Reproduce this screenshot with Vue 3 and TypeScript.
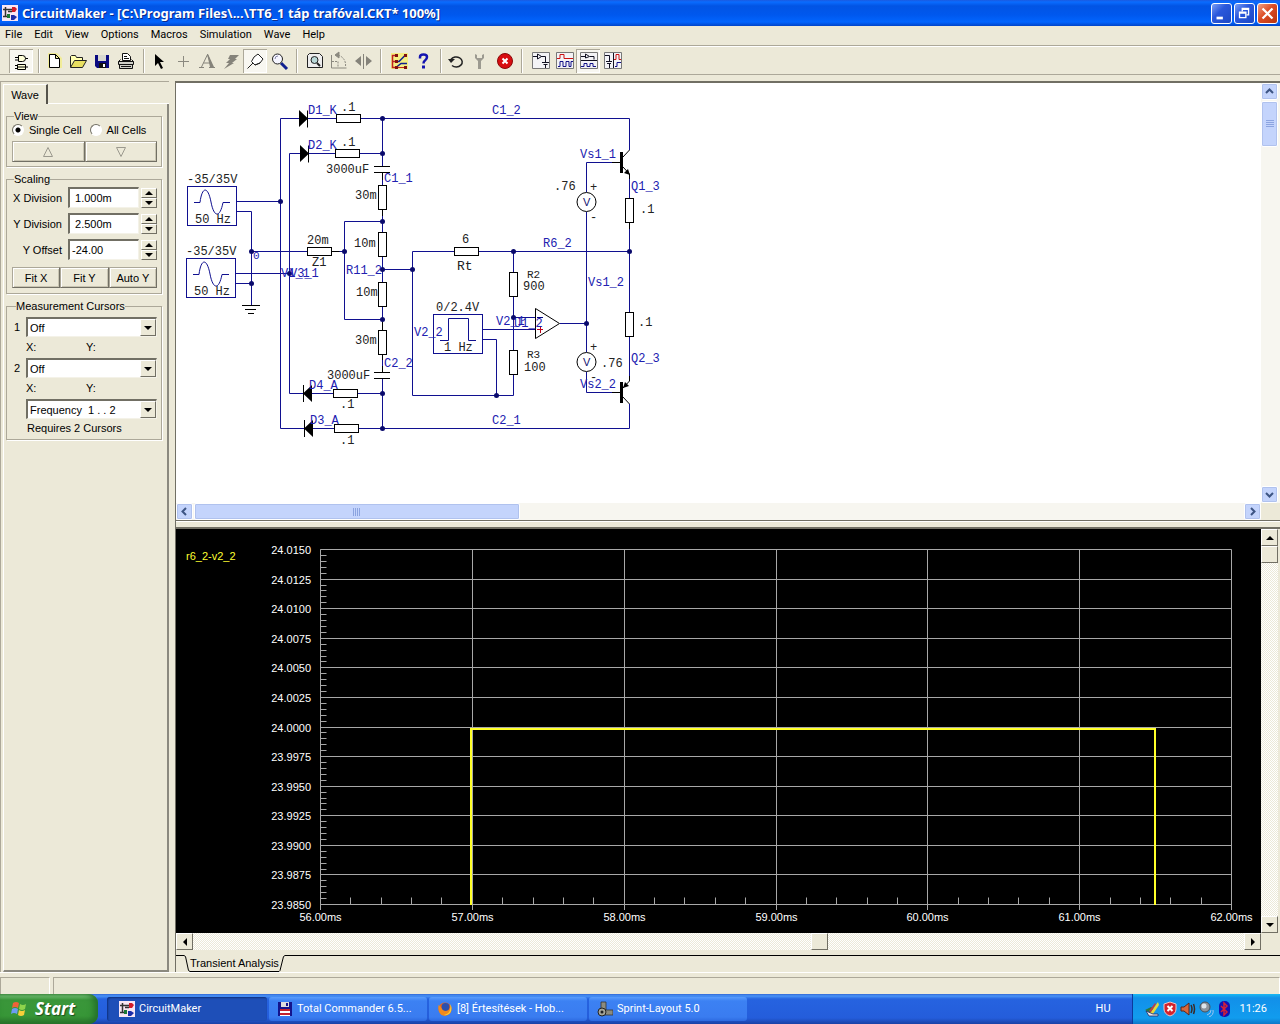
<script setup lang="ts">
import { ref } from 'vue'

interface Tool { name: string; art: string; on?: boolean }
interface Label { x: number; y: number; t: string; net?: boolean; size?: number }
interface Box { x: number; y: number; v?: boolean }

const menus = ['File', 'Edit', 'View', 'Options', 'Macros', 'Simulation', 'Wave', 'Help']

const groups: { wide?: boolean; tools: Tool[] }[] = [
  { tools: [
    { name: 'Digital mode', on: true, art: '<g fill="#ffffd8" stroke="#000"><path d="M9.500 6.500h4a3 3 0 0 1 0 6h-4zM16.500 9.500H19M6 8.500h3M6 11h3"/><path d="M8.500 15.500h8v5h-8zM6 16.500h2M6 19.500h2M17 18h2M8.500 18h8"/></g>' },
  ] },
  { tools: [
    { name: 'New', art: '<path d="M6 4h9l5 5v10H6z" fill="#f6f05a" opacity=".5"/><path d="M7.500 5.500h6l4 4v9h-10zM13.500 5.500v4h4" fill="#fff" stroke="#000"/>' },
    { name: 'Open', art: '<path d="M4.500 18V7.500l1-1h4l1 2h6v3" fill="#ffffb0" stroke="#222"/><path d="M4.500 18.500l4-7h12l-4 7z" fill="#e8df60" stroke="#222"/>' },
    { name: 'Save', art: '<path d="M5 6h14v13H7l-2-2z" fill="#0a0a80"/><path d="M8 6h8v6H8z" fill="#d8d8d0"/><path d="M9 14h7v5H9z" fill="#111"/><path d="M13 15h2v3h-2z" fill="#fff"/>' },
    { name: 'Print', art: '<g stroke="#111" fill="#fff"><path d="M8.500 11.500v-7h5l3 3v4z"/><path d="M10 7.500h3M10 9.500h5" /><path d="M4.500 12.500l2-2M4.500 12.500h15v3h-15zM19.500 12.500l-2-2M5.500 15.500h13v4h-13z" fill="#d0d0c8"/><path d="M7 17.500h10"/></g>' },
  ] },
  { tools: [
    { name: 'Arrow', art: '<path d="M8 5v12l3-3 3 6 2-1-3-6h4z" fill="#000"/>' },
    { name: 'Wire', art: '<path d="M12.500 7v11M7 12.500h11" stroke="#8b897f" fill="none"/>' },
    { name: 'Text', art: '<path d="M4 18.500h5M14 18.500h6M6.500 18L12.500 5.500l5 12.500M8.500 14h7" stroke="#85837a" fill="none"/><path d="M12 5h1l6 13h-4z" fill="#85837a"/>' },
    { name: 'Delete', art: '<path d="M11 6h9l-4 4h2l-5 4h2L5 20l5-6H7l4-4H9z" fill="#85837a"/>' },
    { name: 'Probe', on: true, art: '<g fill="#fff" stroke="#222"><path d="M4.500 19.500L10 14"/><path d="M8.500 12.500l3.500 3.500 5-2 3-4-5-5-4 3z"/><path d="M12 16l5-2"/></g>' },
    { name: 'Zoom', art: '<path d="M14 14l6 6" stroke="#102090" stroke-width="3"/><circle cx="10.500" cy="10" r="5" fill="#f6f6ff" stroke="#222"/><path d="M8 10a3 3 0 0 1 3-3" stroke="#88a" fill="none"/>' },
  ] },
  { wide: true, tools: [
    { name: 'Fit', art: '<path d="M4.500 6.500l2-2h10l3 3v11h-15z" fill="#eee" stroke="#222"/><circle cx="11.500" cy="11" r="3.500" fill="#b9d8d8" stroke="#222"/><path d="M14 14l3 3" stroke="#222" stroke-width="2"/>' },
    { name: 'Rotate', art: '<g fill="none" stroke="#8b897f"><path d="M4.500 6v13h15"/><path d="M18.500 17a10 10 0 0 0-8-11M5 12.500h6v6" stroke-dasharray="2 1"/><path d="M12 3L8 6l4 3z" fill="#8b897f"/></g>' },
    { name: 'Mirror', art: '<path d="M10 7v10l-6-5zM15 7v10l6-5z" fill="#85837a"/><path d="M12.500 5v15" stroke="#85837a"/>' },
  ] },
  { wide: true, tools: [
    { name: 'Run trace', art: '<path d="M4 4h17v16H4z" fill="#f5ee83"/><path d="M9 6.500H5.500v12H9M5.500 12.500H9" fill="none" stroke="#c02020" stroke-width="1.500"/><path d="M9 12.500h3l6-6h2M9 18.500l5-4h6" fill="none" stroke="#102090" stroke-width="1.500"/><path d="M8 5h3v3H8zM17 5h3v3h-3zM8 11h3v3H8zM8 17h3v3H8zM17 17h3v3h-3z" fill="#801010"/><path d="M11 18.500h6" stroke="#c02020"/>' },
    { name: 'Help', art: '<path d="M9 9.500V8q0-2.500 3.500-2.500T16 8q0 2-2 3.500-1.500 1-1.500 3" stroke="#1414b0" stroke-width="2.500" fill="none"/><path d="M11 16.500h3v3h-3z" fill="#1414b0"/>' },
  ] },
  { tools: [
    { name: 'Reset', art: '<path d="M7 10.500a6 5 0 1 1 1 6" fill="none" stroke="#222" stroke-width="1.500"/><path d="M4 10h7l-4 4z" fill="#222"/>' },
    { name: 'Step', art: '<path d="M7 5v4l3 3v8h3v-8l3-3V5l-2 1v3H9V6z" fill="#9c9a90"/>' },
    { name: 'Stop', art: '<circle cx="13" cy="12" r="7.500" fill="#d80d10" stroke="#8a0808"/><path d="M10.500 9.500l5 5M15.500 9.500l-5 5" stroke="#fff" stroke-width="2"/>' },
  ] },
  { wide: true, tools: [
    { name: 'Schematic view', art: '<path d="M4.500 3.500h17v16h-17z" fill="#f3f3f6" stroke="#777"/><path d="M5 7.500h4M9.500 5v5l4-2.500zM13 7.500h4.500v6M14 13.500h7M15.500 15.500h4M17.500 16v3" stroke="#112" fill="none"/>' },
    { name: 'Wave view', art: '<path d="M4.500 3.500h17v16h-17z" fill="#f3f3f6" stroke="#777"/><path d="M5 9.500h3v-4h4v4h9" stroke="#c11" fill="none"/><path d="M6 17.500h2v-5h3v5h3v-5h3v5h2v-5h2" stroke="#118" fill="none"/>' },
    { name: 'Split horizontally', on: true, art: '<path d="M4.500 3.500h17v16h-17z" fill="#f3f3f6" stroke="#777"/><path d="M5 7.500h4M9.500 5v4l4-1.500zM14 7.500h4v3M5 11.500h16" stroke="#112" fill="none"/><path d="M5 17.500h3v-3h3v3h3v-3h3v3h3" stroke="#118" fill="none"/>' },
    { name: 'Split vertically', art: '<path d="M4.500 3.500h17v16h-17z" fill="#f3f3f6" stroke="#777"/><path d="M5 6.500h4.500v6M6 12.500h6M7 14.500h4M9.500 15v4M13.500 4v15" stroke="#112" fill="none"/><path d="M14 10.500h2v-5h3v5h2" stroke="#c11" fill="none"/><path d="M15 17.500h2v-4h4" stroke="#118" fill="none"/>' },
  ] },
]

const viewMode = ref<string>('single')
const scaling = ref([
  { id: 'xdiv', label: 'X Division', value: ' 1.000m' },
  { id: 'ydiv', label: 'Y Division', value: ' 2.500m' },
  { id: 'yoff', label: 'Y Offset', value: '-24.00' },
])

const wires = [
  'M237 201.500H280.500M237 211.500H251.500V305.500M251.500 251.500H307M236 273.500H289.500M236 283.500H251.500',
  'M299 118.500H280.500V428.500H304M300 153.500H289.500V393.500H303',
  'M308 118.500H336M309 153.500H335M361 118.500H629.500V150M360 153.500H382.500',
  'M312 393.500H333M358 393.500H382.500M313 428.500H334M359 428.500H629.500V404',
  'M382.500 118.500V166M382.500 172V185M382.500 210V232M382.500 257V282M382.500 307V330M382.500 355V372M382.500 378V428.500',
  'M332 251.500H344.500M382.500 221.500H344.500V319.500H382.500M382.500 269.500H412.500',
  'M454 251.500H412.500V395.500H513.500V375M479 251.500H629.500M513.500 251.500V272M513.500 297V350',
  'M483 329.500H535M483 339.500H496.500V395.500M513.500 317.500H535M560 323.500H586.500',
  'M612 162.500H586.500V192M586.500 212V352M586.500 372V392.500H612M629.500 174V198M629.500 223V312M629.500 337V381',
]
const dots = [
  [280.5, 201.5], [251.5, 251.5], [251.5, 283.5], [289.5, 273.5], [344.5, 251.5], [382.5, 118.5], [382.5, 153.5],
  [382.5, 221.5], [382.5, 269.5], [382.5, 319.5], [412.5, 269.5], [382.5, 393.5], [382.5, 428.5], [513.5, 251.5],
  [513.5, 317.5], [496.5, 395.5], [586.5, 323.5], [629.5, 251.5],
]
const resistors: Box[] = [
  { x: 307, y: 247 }, { x: 336, y: 114 }, { x: 335, y: 149 }, { x: 333, y: 389 }, { x: 334, y: 424 }, { x: 454, y: 247 },
  { x: 378, y: 185, v: true }, { x: 378, y: 232, v: true }, { x: 378, y: 282, v: true }, { x: 378, y: 330, v: true },
  { x: 509, y: 272, v: true }, { x: 509, y: 350, v: true }, { x: 625, y: 198, v: true }, { x: 625, y: 312, v: true },
]
const labels: Label[] = [
  { x: 187, y: 183, t: '-35/35V' }, { x: 195, y: 223, t: '50 Hz' }, { x: 186, y: 255, t: '-35/35V' }, { x: 194, y: 295, t: '50 Hz' },
  { x: 341, y: 111, t: '.1' }, { x: 341, y: 146, t: '.1' }, { x: 326, y: 173, t: '3000uF' }, { x: 355, y: 199, t: '30m' },
  { x: 354, y: 247, t: '10m' }, { x: 356, y: 296, t: '10m' }, { x: 355, y: 344, t: '30m' }, { x: 327, y: 379, t: '3000uF' },
  { x: 307, y: 244, t: '20m' }, { x: 312, y: 266, t: 'Z1' }, { x: 340, y: 408, t: '.1' }, { x: 340, y: 444, t: '.1' },
  { x: 462, y: 243, t: '6' }, { x: 457, y: 270, t: 'Rt', size: 13 }, { x: 527, y: 278, t: 'R2', size: 11 }, { x: 523, y: 290, t: '900' },
  { x: 527, y: 358, t: 'R3', size: 11 }, { x: 524, y: 371, t: '100' }, { x: 436, y: 311, t: '0/2.4V' }, { x: 444, y: 351, t: '1 Hz' },
  { x: 554, y: 190, t: '.76' }, { x: 590, y: 191, t: '+' }, { x: 590, y: 221, t: '-' }, { x: 640, y: 213, t: '.1' },
  { x: 638, y: 326, t: '.1' }, { x: 601, y: 367, t: '.76' }, { x: 590, y: 351, t: '+' }, { x: 590, y: 381, t: '-' },
  { x: 308, y: 114, t: 'D1_K', net: true }, { x: 308, y: 149, t: 'D2_K', net: true }, { x: 384, y: 182, t: 'C1_1', net: true },
  { x: 253, y: 259, t: '0', net: true, size: 11 }, { x: 281, y: 277, t: 'V1_1', net: true }, { x: 290, y: 277, t: 'V3_1', net: true },
  { x: 346, y: 274, t: 'R11_2', net: true }, { x: 384, y: 367, t: 'C2_2', net: true }, { x: 309, y: 389, t: 'D4_A', net: true },
  { x: 310, y: 424, t: 'D3_A', net: true }, { x: 492, y: 114, t: 'C1_2', net: true }, { x: 492, y: 424, t: 'C2_1', net: true },
  { x: 580, y: 158, t: 'Vs1_1', net: true }, { x: 631, y: 190, t: 'Q1_3', net: true }, { x: 543, y: 247, t: 'R6_2', net: true },
  { x: 588, y: 286, t: 'Vs1_2', net: true }, { x: 631, y: 362, t: 'Q2_3', net: true }, { x: 580, y: 388, t: 'Vs2_2', net: true },
  { x: 414, y: 336, t: 'V2_2', net: true }, { x: 496, y: 325, t: 'V2_1', net: true }, { x: 514, y: 327, t: 'U1_2', net: true },
]

const left = 320.5
const right = 1231.5
const top = 548.5
const bottom = 903.5
const rowStep = (bottom - top) / 12
const colStep = (right - left) / 6
const rows = Array.from({ length: 13 }, (_, i) => ({ y: Math.floor(top + i * rowStep) + 0.5, t: (24.015 - i * 0.0025).toFixed(4) }))
const cols = Array.from({ length: 7 }, (_, i) => ({ x: Math.floor(left + i * colStep) + 0.5, t: `${56 + i}.00ms` }))
const yTicks = Array.from({ length: 60 }, (_, i) => Math.floor(top + (i * rowStep) / 5) + 0.5)
const xTicks = Array.from({ length: 30 }, (_, i) => Math.floor(left + (i * colStep) / 5) + 0.5)

const tasks = [
  { t: 'CircuitMaker', icon: 'cm', active: true },
  { t: 'Total Commander 6.5...', icon: 'tc' },
  { t: '[8] Értesítések - Hob...', icon: 'ff' },
  { t: 'Sprint-Layout 5.0', icon: 'sl' },
]
</script>

<template>
  <div class="desktop">
    <header class="title">
      <svg class="app-icon" viewBox="0 0 16 16"><rect width="16" height="16" fill="#f8e6f4" /><path d="M1 4.500h9M3.500 2v9M1 11.500h5M6 6.500h4" stroke="#333" stroke-width="1.500" fill="none" /><path d="M10 2h3l2 2-2 3h-3z" fill="#d21c2a" /><path d="M9 10h3l3 2-3 3H9z" fill="#1d2da8" /><path d="M5 9h3v4H5z" fill="#1d7a35" /></svg>
      <h1>CircuitMaker - [C:\Program Files\...\TT6_1 táp trafóval.CKT* 100%]</h1>
      <div class="win-buttons">
        <button aria-label="Minimize"><svg viewBox="0 0 21 21"><path d="M5 14h7v3H5z" fill="#fff" /></svg></button>
        <button aria-label="Restore"><svg viewBox="0 0 21 21"><path d="M8 8V5h7v7h-2M8 6h7M5 9h7v6H5zM5 10h7" fill="none" stroke="#fff" stroke-width="1.500" /></svg></button>
        <button class="close" aria-label="Close"><svg viewBox="0 0 21 21"><path d="M5 5l11 11M16 5L5 16" stroke="#fff" stroke-width="2.500" /></svg></button>
      </div>
    </header>

    <nav class="menu"><a v-for="m in menus" :key="m" href="#">{{ m }}</a></nav>

    <div class="toolbar">
      <div v-for="(g, gi) in groups" :key="gi" class="tools" :class="{ wide: g.wide }">
        <button v-for="t in g.tools" :key="t.name" :class="{ on: t.on }" :aria-label="t.name">
          <svg viewBox="0 0 24 24" v-html="t.art"></svg>
        </button>
      </div>
    </div>

    <main>
      <aside>
        <div class="tab-row"><button class="tab">Wave</button><i></i></div>
        <form class="pane" @submit.prevent>
          <fieldset>
            <legend>View</legend>
            <div class="radios">
              <label><input v-model="viewMode" type="radio" name="view" value="single">Single Cell</label>
              <label><input v-model="viewMode" type="radio" name="view" value="all">All Cells</label>
            </div>
            <div class="buttons steps">
              <button type="button" aria-label="Previous cell"><svg viewBox="0 0 12 12"><path d="M1.500 10.500h9L6 1.500z" /></svg></button>
              <button type="button" aria-label="Next cell"><svg viewBox="0 0 12 12"><path d="M1.500 1.500h9L6 10.500z" /></svg></button>
            </div>
          </fieldset>

          <fieldset class="scaling">
            <legend>Scaling</legend>
            <div v-for="s in scaling" :key="s.id" class="scale-row">
              <label :for="s.id">{{ s.label }}</label>
              <input :id="s.id" v-model="s.value" type="text">
              <span class="spin">
                <button type="button" :aria-label="s.label + ' up'"><svg viewBox="0 0 8 4"><path d="M0 4h8L4 0z" /></svg></button>
                <button type="button" :aria-label="s.label + ' down'"><svg viewBox="0 0 8 4"><path d="M0 0h8L4 4z" /></svg></button>
              </span>
            </div>
            <div class="buttons">
              <button type="button">Fit X</button><button type="button">Fit Y</button><button type="button">Auto Y</button>
            </div>
          </fieldset>

          <fieldset class="cursors">
            <legend>Measurement Cursors</legend>
            <template v-for="n in 2" :key="n">
              <div class="cursor-row">
                <label :for="'cursor' + n">{{ n }}</label>
                <span class="combo"><select :id="'cursor' + n"><option>Off</option></select><b><svg viewBox="0 0 8 4"><path d="M0 0h8L4 4z" /></svg></b></span>
              </div>
              <div class="xy"><span>X:</span><span>Y:</span></div>
            </template>
            <div class="cursor-row">
              <span></span>
              <span class="combo"><select aria-label="Measurement"><option>Frequency&nbsp; 1 . . 2</option></select><b><svg viewBox="0 0 8 4"><path d="M0 0h8L4 4z" /></svg></b></span>
            </div>
            <div class="note">Requires 2 Cursors</div>
          </fieldset>
        </form>
      </aside>

      <section class="work">
        <div class="sheet">
          <div class="canvas">
            <svg class="circuit" viewBox="176 83 500 370">
              <g class="wire"><path v-for="(w, i) in wires" :key="i" :d="w" /></g>
              <g class="wire part">
                <rect x="187.500" y="186.500" width="49" height="39" /><path d="M194 202.500H200C202 186 208 186 211 202C214 218 220 218 223 202.500H230" />
                <rect x="186.500" y="258.500" width="49" height="39" /><path d="M193 274.500H199C201 258 207 258 210 274C213 290 219 290 222 274.500H229" />
                <rect x="433.500" y="314.500" width="49" height="39" /><path d="M440 340.500H448.500V318.500H468.500V340.500H476" />
              </g>
              <g class="black">
                <rect v-for="(r, i) in resistors" :key="i" :x="r.x + 0.5" :y="r.y + 0.5" :width="r.v ? 8 : 24" :height="r.v ? 24 : 8" />
                <path d="M242 305.500h18M245 309.500h11M248 313.500h6M374 166.500h16M374 172.500h16M374 372.500h16M374 378.500h16" />
                <path d="M331.500 251.500h8M382.500 173v7M382.500 210v6M382.500 322v8M382.500 355v5M382.500 366v6M629.500 223v6M612 162.500h9M612 392.500h9M623 157l6.500-7M623 167l6.500 7v5M623 397l6.500 7M623 388l6.500-7v-5" />
                <circle cx="586.500" cy="202" r="9.500" /><circle cx="586.500" cy="362" r="9.500" />
                <path d="M535.500 308.500v30l24-15z" />
              </g>
              <g>
                <path d="M299 110v17l9-8.500zM300 145v17l9-8.500zM312 385v17l-9-8.500zM313 420v17l-9-8.500zM620 152h3v21h-3zM620 382h3v21h-3zM630 175l-6-2 4-4zM623 388l2-6 4 4z" />
                <path d="M307.500 110.500v17M308.500 145.500v17M303.500 385v17M304.500 420v17" stroke="#000" />
              </g>
              <circle v-for="(d, i) in dots" :key="i" :cx="d[0]" :cy="d[1]" r="2.500" fill="#0a0a6c" />
              <path d="M537 317.500h6" stroke="#00007c" /><path d="M537 329.500h6M540.500 326v7" stroke="#c00018" />
              <text x="583" y="206" class="volt">V</text><text x="583" y="366" class="volt">V</text>
              <text v-for="(l, i) in labels" :key="i" :x="l.x" :y="l.y" :class="{ net: l.net }" :font-size="l.size || 12">{{ l.t }}</text>
            </svg>
          </div>
          <div class="xp-bar vertical">
            <button aria-label="Scroll up"><svg viewBox="0 0 9 9"><path d="M1 6l3.500-3.500L8 6" /></svg></button>
            <div class="xp-thumb"><svg viewBox="0 0 8 8"><path d="M0 .5h8M0 2.500h8M0 4.500h8M0 6.500h8" /></svg></div>
            <i></i>
            <button aria-label="Scroll down"><svg viewBox="0 0 9 9"><path d="M1 3l3.500 3.500L8 3" /></svg></button>
          </div>
          <div class="xp-bar horizontal">
            <button aria-label="Scroll left"><svg viewBox="0 0 9 9"><path d="M6 1L2.500 4.500 6 8" /></svg></button>
            <div class="xp-thumb"><svg viewBox="0 0 8 8"><path d="M.5 0v8M2.500 0v8M4.500 0v8M6.500 0v8" /></svg></div>
            <i></i>
            <button aria-label="Scroll right"><svg viewBox="0 0 9 9"><path d="M3 1l3.500 3.500L3 8" /></svg></button>
          </div>
          <div class="corner"></div>
        </div>

        <div class="splitter"></div>

        <div class="plot">
          <svg class="chart" viewBox="176 528 1085 404">
            <g class="grid">
              <path v-for="r in rows" :key="r.t" :d="`M${left} ${r.y}H${right}`" />
              <path v-for="c in cols" :key="c.t" :d="`M${c.x} ${top}V909`" />
              <path v-for="y in yTicks" :key="y" :d="`M${left} ${y}h6`" />
              <path v-for="x in xTicks" :key="x" :d="`M${x} ${bottom}v-7`" />
            </g>
            <path d="M471 904V728H1155V904" fill="none" stroke="#ffff28" stroke-width="2" />
            <g class="axis">
              <text v-for="r in rows" :key="r.t" x="311" :y="r.y + 4" text-anchor="end">{{ r.t }}</text>
              <text v-for="c in cols" :key="c.t" :x="c.x" y="920" text-anchor="middle">{{ c.t }}</text>
              <text x="186" y="559" class="trace">r6_2-v2_2</text>
            </g>
          </svg>
          <div class="bar vertical">
            <button aria-label="Plot up"><svg viewBox="0 0 8 4"><path d="M0 4h8L4 0z" /></svg></button>
            <div class="thumb"></div><i></i>
            <button aria-label="Plot down"><svg viewBox="0 0 8 4"><path d="M0 0h8L4 4z" /></svg></button>
          </div>
          <div class="bar horizontal">
            <button aria-label="Plot left"><svg viewBox="0 0 4 8"><path d="M4 0v8L0 4z" /></svg></button>
            <i class="before"></i><div class="thumb"></div><i></i>
            <button aria-label="Plot right"><svg viewBox="0 0 4 8"><path d="M0 0v8l4-4z" /></svg></button>
          </div>
        </div>

        <div class="analysis">
          <i class="lead"></i>
          <svg viewBox="0 0 6 17"><path d="M0 .5l1.500 1 3 14 1.500 1" /></svg>
          <button>Transient Analysis</button>
          <svg viewBox="0 0 6 17"><path d="M0 16.500l1-1 3.500-14L6 .5" /></svg>
          <i class="rest"></i>
        </div>
      </section>
    </main>

    <div class="status"><span></span><span></span></div>

    <footer>
      <button class="start">
        <svg viewBox="0 0 18 18"><path d="M3 3q3-2 6 0L8 8Q5 6 2 8z" fill="#ef6239" /><path d="M10 4q3 2 6 0l-1 5q-3 2-6 0z" fill="#8fd44c" /><path d="M2 9q3-2 6 0l-1 5q-3-2-6 0z" fill="#6c9cf4" /><path d="M9 10q3 2 6 0l-1 5q-3 2-6 0z" fill="#f7cf3a" /></svg>
        Start
      </button>
      <div class="tasks">
        <button v-for="t in tasks" :key="t.t" :class="{ active: t.active }">
          <svg viewBox="0 0 16 16">
            <template v-if="t.icon === 'cm'"><rect width="16" height="16" fill="#f8e6f4" /><path d="M1 4.500h9M3.500 2v9M1 11.500h5M6 6.500h4" stroke="#333" stroke-width="1.500" fill="none" /><path d="M10 2h3l2 2-2 3h-3z" fill="#d21c2a" /><path d="M9 10h3l3 2-3 3H9z" fill="#1d2da8" /><path d="M5 9h3v4H5z" fill="#1d7a35" /></template>
            <template v-else-if="t.icon === 'tc'"><path d="M1 1h14v14H1z" fill="#14148c" /><path d="M4 1h8v5H4z" fill="#ddd" /><path d="M9 2h2v3H9z" fill="#14148c" /><path d="M3 8h10v7H3z" fill="#fff" /><path d="M3 8h10v2H3zM3 12h10v2H3z" fill="#c3222c" /></template>
            <template v-else-if="t.icon === 'ff'"><circle cx="8" cy="8" r="6.500" fill="#e8641a" /><circle cx="8.500" cy="6" r="4" fill="#2c4fae" /><path d="M1.500 4q2 1 3 3 1 3 4 3 4 0 5-5 2 5-1 8-4 3-8 1-4-3-3-10z" fill="#f08a1e" /><path d="M13 3q3 4 0 9-3 3-6 2 5-1 6-5 1-3 0-6z" fill="#f7cf3a" /></template>
            <template v-else><path d="M4 1h5v8H4zM8 9h8v5H8z" fill="#8b8b80" stroke="#333" stroke-width=".8" /><circle cx="5" cy="11" r="4" fill="#a5a59a" stroke="#222" /><circle cx="5" cy="11" r="1.500" fill="#222" /></template>
          </svg>
          <span>{{ t.t }}</span>
        </button>
      </div>
      <span class="lang">HU</span>
      <div class="tray">
        <svg viewBox="0 0 16 16"><path d="M1 9l6 3L15 3l-5 4-3-1z" fill="#2c7a3a" /><path d="M6 12L14 1l1 3-6 9z" fill="#e8d83a" /><path d="M2 10l7 3h5v2H5z" fill="#e8e8e8" stroke="#2a2a60" stroke-width=".8" /><path d="M5 10l6-8 1 1-5 8z" fill="#c23a4a" /></svg>
        <svg viewBox="0 0 16 16"><path d="M8 1l6 2v5q0 5-6 7-6-2-6-7V3z" fill="#d4222c" stroke="#f2c4c4" /><path d="M5.500 5l5 5M10.500 5l-5 5" stroke="#fff" stroke-width="2" /></svg>
        <svg viewBox="0 0 16 16"><path d="M1 6h3l5-4v12l-5-4H1z" fill="#d9683c" stroke="#5c2418" /><path d="M11 4q2 4 0 8M13.500 3q2 5 0 10" fill="none" stroke="#3a2a28" stroke-width="1.500" /></svg>
        <svg viewBox="0 0 16 16"><circle cx="7" cy="6" r="5" fill="#8d949c" stroke="#4a5058" /><circle cx="6" cy="5" r="2.500" fill="#dfe5ea" /><path d="M9 14q4-1 4-5M11 16q5-2 4-7" fill="none" stroke="#9cc6f2" /></svg>
        <svg viewBox="0 0 16 16"><rect x="3" y="0" width="11" height="16" rx="5" fill="#1212b4" /><path d="M5 5l6 6-3 3V2l3 3-6 6" fill="none" stroke="#d62036" stroke-width="1.500" /></svg>
        <time>11:26</time>
      </div>
    </footer>
  </div>
</template>

<style>
body { margin: 0; background: #ece9d8; }
</style>

<style scoped>
* { box-sizing: border-box; }
button, input, select { font: inherit; color: inherit; margin: 0; padding: 0; border: 0; border-radius: 0; background: none; }
svg { display: block; flex: none; }
.desktop { display: flex; flex-direction: column; min-height: 100vh; background: #ece9d8; color: #000; font: 11px/14px "Liberation Sans", Arial, sans-serif; }

.title { display: flex; align-items: center; height: 26px; padding: 0 2px; background: linear-gradient(#1c5ae0 0, #0a6cff 2px, #0254e4 6px, #0058ee 15px, #0265fe 22px, #0144c8 26px); }
.app-icon { width: 16px; height: 16px; }
h1 { flex: 1; margin: 0 0 0 4px; color: #fff; font: bold 13px/20px "Noto Sans", "Open Sans", sans-serif; text-shadow: 1px 1px #0a2a8c; white-space: nowrap; overflow: hidden; }
.win-buttons { display: flex; gap: 2px; }
.win-buttons button { width: 21px; height: 21px; border: 1px solid #fff; border-radius: 3px; background: linear-gradient(135deg, #7c9ff5, #2a58dc 40%, #1c48c4); }
.win-buttons svg { width: 19px; height: 19px; }
.win-buttons .close { background: linear-gradient(135deg, #f0a084, #dc4c24 45%, #b8340e); }

.menu { display: flex; gap: 12px; height: 20px; padding: 0 5px; font: 11px/18px Roboto, "Noto Sans", sans-serif; border-bottom: 1px solid #aca899; }
.menu a { color: #000; text-decoration: none; }

.toolbar { display: flex; align-items: center; height: 29px; padding-left: 6px; border-top: 1px solid #fff; border-bottom: 1px solid #aca899; }
.tools { display: flex; padding: 0 5px 0 3px; border-right: 1px solid #aca899; box-shadow: 1px 0 #fff; }
.tools.wide { padding-left: 6px; }
.tools:last-child { border: 0; box-shadow: none; }
.tools button { width: 24px; height: 24px; }
.tools svg { width: 24px; height: 24px; }
.tools .on { background: #f8f7f1; box-shadow: inset 1px 1px #aca899, inset -1px -1px #fff; }

main { flex: 1; display: flex; gap: 6px; margin-top: 6px; }
aside { display: flex; flex-direction: column; width: 169px; padding: 2px 0 0 2px; border-top: 1px solid #aca899; border-left: 1px solid #aca899; }
.tab-row { display: flex; height: 20px; }
.tab { width: 45px; border-right: 2px solid #55534b; border-left: 1px solid #fff; border-top: 1px solid #fff; }
.tab-row i { flex: 1; border-bottom: 1px solid #fff; }
.pane { flex: 1; display: flex; flex-direction: column; gap: 6px; padding: 6px 5px 0 2px; border-right: 2px solid #8b897f; border-bottom: 2px solid #8b897f; border-left: 1px solid #fff; }
fieldset { min-width: 0; margin: 0; padding: 1px 4px 4px 5px; border: 1px solid #aca899; box-shadow: 1px 1px #fff; }
legend { margin-left: 2px; padding: 0; height: 12px; line-height: 12px; }
.radios { display: flex; gap: 8px; height: 14px; margin-bottom: 4px; }
.radios label { display: flex; align-items: center; gap: 4px; white-space: nowrap; }
input[type="radio"] { appearance: none; width: 12px; height: 12px; margin-right: 1px; border: 1px solid #fff; border-top-color: #716f64; border-left-color: #716f64; border-radius: 50%; background: #fff; }
input[type="radio"]:checked { background: radial-gradient(circle, #000 2px, #fff 3px); }
.buttons { display: flex; }
.buttons button { flex: 1; display: flex; align-items: center; justify-content: center; height: 21px; border: 1px solid #716f64; border-top-color: #aca899; border-left-color: #aca899; box-shadow: inset 1px 1px #fff, inset -1px -1px #c9c5b2; }
.steps svg { width: 12px; height: 12px; }
.steps path { fill: none; stroke: #9b998e; }
.scaling { padding-top: 2px; padding-bottom: 5px; }
.scaling .buttons { margin-top: 7px; }
.scale-row { display: flex; align-items: center; gap: 2px; }
.scale-row + .scale-row { margin-top: 5px; }
.scale-row label { flex: 1; padding-right: 4px; text-align: right; white-space: nowrap; }
.scale-row input { width: 71px; height: 21px; padding-left: 2px; background: #fff; border: 1px solid #f4f2e8; border-top: 2px solid #716f64; border-left: 2px solid #716f64; }
.spin { display: flex; flex-direction: column; width: 16px; }
.spin button { display: flex; align-items: center; justify-content: center; height: 10px; border: 1px solid #716f64; border-top-color: #fff; border-left-color: #fff; }
.spin svg, .combo svg { width: 8px; height: 4px; }
.cursors { padding-top: 5px; padding-left: 7px; padding-bottom: 1px; }
.cursor-row { display: grid; grid-template-columns: 12px 1fr; align-items: center; }
.combo { display: flex; height: 20px; background: #fff; border: 1px solid #f4f2e8; border-top: 2px solid #716f64; border-left: 2px solid #716f64; }
.combo select { flex: 1; min-width: 0; padding-left: 2px; appearance: none; background: #fff; }
.combo b { display: flex; align-items: center; justify-content: center; width: 16px; background: #ece9d8; border: 1px solid #716f64; border-top-color: #fff; border-left-color: #fff; pointer-events: none; }
.xy { display: grid; grid-template-columns: 60px 1fr; height: 21px; padding-left: 12px; line-height: 21px; }
.note { padding-left: 13px; line-height: 19px; }

.work { flex: 1; min-width: 0; display: flex; flex-direction: column; border-left: 1px solid #716f64; }
.sheet { flex: 1; display: grid; grid-template: 1fr 17px / 1fr 19px; background: #fff; border-top: 2px solid #716f64; border-bottom: 1px solid #716f64; }
.corner { background: #ece9d8; }
.canvas { overflow: hidden; }
.circuit { width: 500px; height: 370px; font-family: "Liberation Mono", "Courier New", monospace; }
.circuit text { fill: #222; }
.circuit .net { fill: #2020b0; }
.circuit .volt { font: 11px "Liberation Sans", Arial, sans-serif; fill: #111170; }
.wire { fill: none; stroke: #101090; }
.part rect { fill: none; stroke: #101090; }
.black { fill: #fff; stroke: #000; }
.xp-bar { display: flex; gap: 1px; background: #f7f6f0; }
.xp-bar.vertical { flex-direction: column; padding-right: 2px; }
.xp-bar button, .xp-thumb { display: flex; align-items: center; justify-content: center; border: 1px solid #fff; border-radius: 2px; background: #c4d4fc; box-shadow: inset 0 0 0 1px #b0c2ee; }
.xp-bar button { width: 17px; height: 17px; flex: none; }
.xp-bar button svg { width: 9px; height: 9px; }
.xp-bar button path { fill: none; stroke: #3d5584; stroke-width: 2; }
.xp-bar .xp-thumb svg { width: 8px; height: 8px; }
.xp-thumb path { stroke: #8ca4e0; }
.xp-bar i { flex: 1; }
.vertical .xp-thumb { height: 46px; }
.horizontal .xp-thumb { width: 30%; }

.splitter { height: 8px; background: linear-gradient(#fff 0 1px, #ece9d8 1px 6px, #716f64 6px 8px); }
.plot { display: grid; grid-template: auto 17px / 1fr 19px; }
.chart { width: 100%; background: #000; }
.grid { stroke: #a8a8a8; }
.axis { font: 11px "Liberation Sans", Arial, sans-serif; fill: #fff; }
.axis .trace { fill: #ffff30; }
.bar { display: flex; background: repeating-conic-gradient(#fff 0 25%, #ece9d8 0 50%) 0 0 / 2px 2px; }
.bar.vertical { flex-direction: column; margin-right: 2px; }
.bar button, .thumb { display: flex; align-items: center; justify-content: center; width: 17px; height: 17px; flex: none; background: #ece9d8; border: 1px solid #716f64; border-top-color: #fff; border-left-color: #fff; }
.bar svg { width: 8px; height: 8px; }
.bar i { flex: 1; }
.bar .before { flex: none; width: 57%; }

.analysis { display: flex; height: 22px; padding-top: 5px; }
.analysis svg { width: 6px; height: 17px; }
.analysis path { fill: none; stroke: #000; }
.analysis button { height: 17px; border-bottom: 1px solid #000; }
.analysis i { border-top: 1px solid #000; }
.analysis .lead { width: 8px; }
.analysis .rest { flex: 1; }

.status { display: flex; gap: 3px; height: 22px; padding-top: 4px; border-top: 1px solid #fff; }
.status span { border-left: 1px solid #aca899; border-top: 1px solid #aca899; border-right: 1px solid #fff; }
.status span:first-child { width: 50px; }
.status span:last-child { flex: 1; }

footer { display: flex; height: 30px; color: #fff; font: 11px/14px Roboto, "Noto Sans", sans-serif; background: linear-gradient(#3168d5 0, #4993f6 2px, #2663e0 5px, #245ddb 24px, #1941a5 30px); }
.start { display: flex; align-items: center; gap: 7px; width: 98px; padding-left: 10px; border-radius: 0 9px 9px 0; background: linear-gradient(#5ca85a 0, #73c274 2px, #3a963a 6px, #379637 22px, #2a742b 30px); box-shadow: inset -4px 0 6px #24702a; font: italic bold 17px/20px "Open Sans", "Noto Sans", sans-serif; text-shadow: 1px 1px 1px #1d4d1e; }
.start svg { width: 18px; height: 18px; }
.tasks { flex: 1; display: flex; gap: 2px; min-width: 0; padding: 3px 0 3px 9px; }
.tasks button { display: flex; align-items: center; gap: 4px; width: 158px; padding-left: 8px; border-radius: 3px; background: linear-gradient(#5a9cfc, #3c81f3 4px, #3a7cf0 20px, #2d6ae0); white-space: nowrap; }
.tasks .active { width: 160px; padding-left: 12px; background: #1e4fb8; box-shadow: inset 1px 1px 2px #0e2f7c; }
.tasks svg { width: 16px; height: 16px; }
.lang { padding: 8px 21px 0 0; }
.tray { display: flex; align-items: center; gap: 2px; padding: 0 13px 0 11px; border-left: 1px solid #0c3a9c; background: linear-gradient(#19b9f3 0, #1290e9 4px, #119cee 24px, #0d77c8 30px); }
.tray svg { width: 16px; height: 16px; }
.tray time { margin-left: 6px; }
</style>
